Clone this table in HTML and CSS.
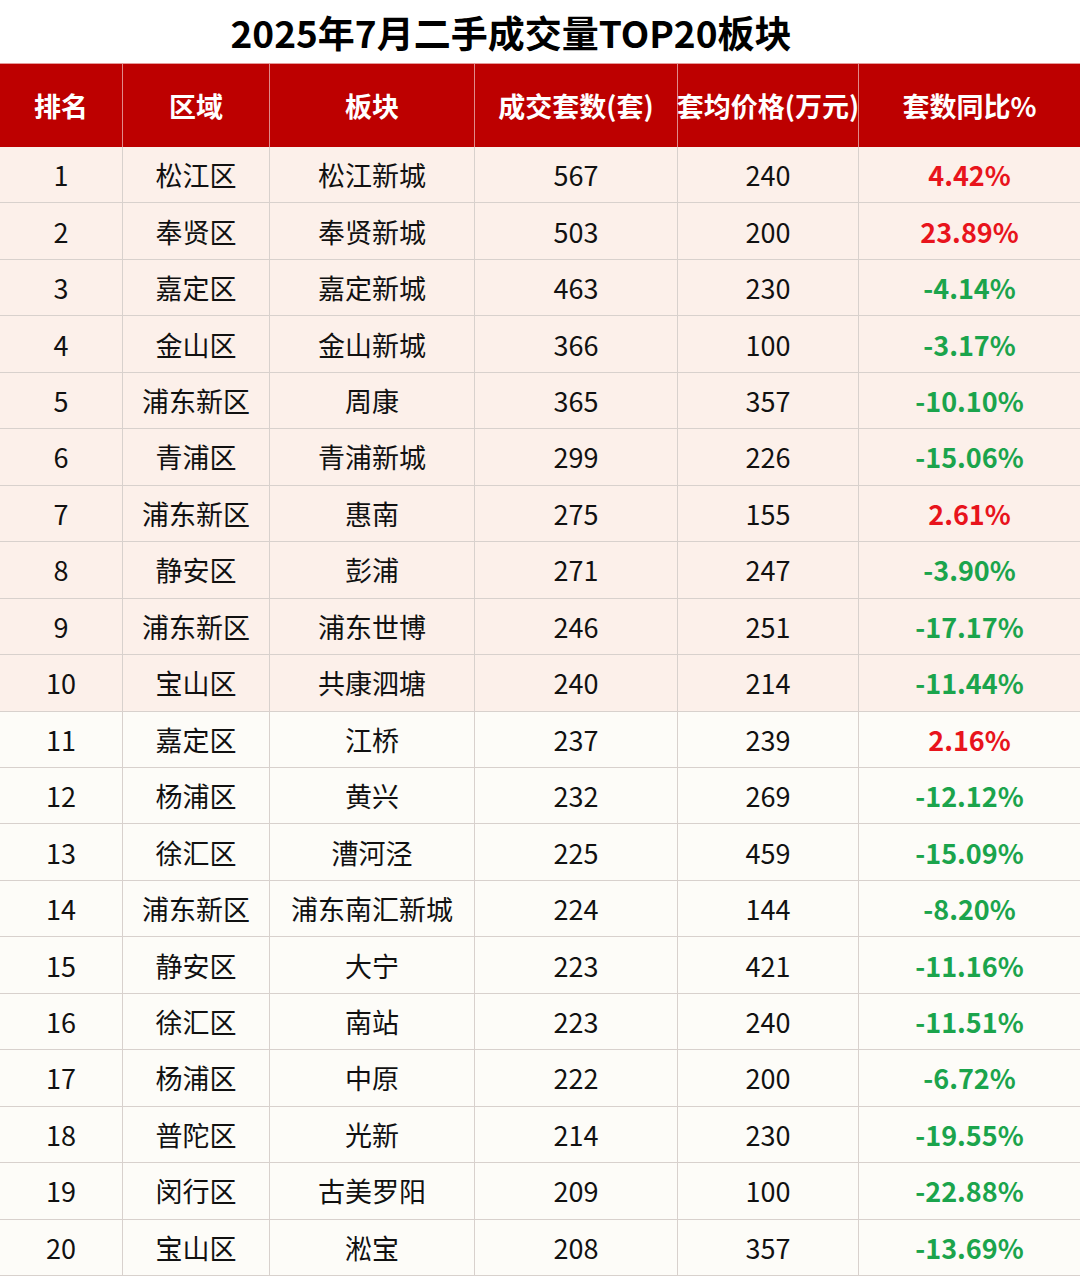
FILE: index.html
```html
<!DOCTYPE html>
<html lang="zh-CN">
<head>
<meta charset="utf-8">
<title>2025年7月二手成交量TOP20板块</title>
<link rel="stylesheet" href="styles.css">
</head>
<body>
<div class="page">
  <h1 class="title">2025年7月二手成交量TOP20板块</h1>
  <div class="table">
    <div class="row head">
      <div class="cell">排名</div><div class="cell">区域</div><div class="cell">板块</div><div class="cell">成交套数(套)</div><div class="cell">套均价格(万元)</div><div class="cell">套数同比%</div>
    </div>
    <div class="row pink"><div class="cell">1</div><div class="cell">松江区</div><div class="cell">松江新城</div><div class="cell">567</div><div class="cell">240</div><div class="cell pct up">4.42%</div></div>
    <div class="row pink"><div class="cell">2</div><div class="cell">奉贤区</div><div class="cell">奉贤新城</div><div class="cell">503</div><div class="cell">200</div><div class="cell pct up">23.89%</div></div>
    <div class="row pink"><div class="cell">3</div><div class="cell">嘉定区</div><div class="cell">嘉定新城</div><div class="cell">463</div><div class="cell">230</div><div class="cell pct down">-4.14%</div></div>
    <div class="row pink"><div class="cell">4</div><div class="cell">金山区</div><div class="cell">金山新城</div><div class="cell">366</div><div class="cell">100</div><div class="cell pct down">-3.17%</div></div>
    <div class="row pink"><div class="cell">5</div><div class="cell">浦东新区</div><div class="cell">周康</div><div class="cell">365</div><div class="cell">357</div><div class="cell pct down">-10.10%</div></div>
    <div class="row pink"><div class="cell">6</div><div class="cell">青浦区</div><div class="cell">青浦新城</div><div class="cell">299</div><div class="cell">226</div><div class="cell pct down">-15.06%</div></div>
    <div class="row pink"><div class="cell">7</div><div class="cell">浦东新区</div><div class="cell">惠南</div><div class="cell">275</div><div class="cell">155</div><div class="cell pct up">2.61%</div></div>
    <div class="row pink"><div class="cell">8</div><div class="cell">静安区</div><div class="cell">彭浦</div><div class="cell">271</div><div class="cell">247</div><div class="cell pct down">-3.90%</div></div>
    <div class="row pink"><div class="cell">9</div><div class="cell">浦东新区</div><div class="cell">浦东世博</div><div class="cell">246</div><div class="cell">251</div><div class="cell pct down">-17.17%</div></div>
    <div class="row pink"><div class="cell">10</div><div class="cell">宝山区</div><div class="cell">共康泗塘</div><div class="cell">240</div><div class="cell">214</div><div class="cell pct down">-11.44%</div></div>
    <div class="row light"><div class="cell">11</div><div class="cell">嘉定区</div><div class="cell">江桥</div><div class="cell">237</div><div class="cell">239</div><div class="cell pct up">2.16%</div></div>
    <div class="row light"><div class="cell">12</div><div class="cell">杨浦区</div><div class="cell">黄兴</div><div class="cell">232</div><div class="cell">269</div><div class="cell pct down">-12.12%</div></div>
    <div class="row light"><div class="cell">13</div><div class="cell">徐汇区</div><div class="cell">漕河泾</div><div class="cell">225</div><div class="cell">459</div><div class="cell pct down">-15.09%</div></div>
    <div class="row light"><div class="cell">14</div><div class="cell">浦东新区</div><div class="cell">浦东南汇新城</div><div class="cell">224</div><div class="cell">144</div><div class="cell pct down">-8.20%</div></div>
    <div class="row light"><div class="cell">15</div><div class="cell">静安区</div><div class="cell">大宁</div><div class="cell">223</div><div class="cell">421</div><div class="cell pct down">-11.16%</div></div>
    <div class="row light"><div class="cell">16</div><div class="cell">徐汇区</div><div class="cell">南站</div><div class="cell">223</div><div class="cell">240</div><div class="cell pct down">-11.51%</div></div>
    <div class="row light"><div class="cell">17</div><div class="cell">杨浦区</div><div class="cell">中原</div><div class="cell">222</div><div class="cell">200</div><div class="cell pct down">-6.72%</div></div>
    <div class="row light"><div class="cell">18</div><div class="cell">普陀区</div><div class="cell">光新</div><div class="cell">214</div><div class="cell">230</div><div class="cell pct down">-19.55%</div></div>
    <div class="row light"><div class="cell">19</div><div class="cell">闵行区</div><div class="cell">古美罗阳</div><div class="cell">209</div><div class="cell">100</div><div class="cell pct down">-22.88%</div></div>
    <div class="row light"><div class="cell">20</div><div class="cell">宝山区</div><div class="cell">淞宝</div><div class="cell">208</div><div class="cell">357</div><div class="cell pct down">-13.69%</div></div>
  </div>
</div>
</body>
</html>
```

FILE: styles.css
```css
html, body {
  margin: 0;
  padding: 0;
  background: #ffffff;
}
body {
  font-family: "Noto Sans CJK SC", "Noto Sans", sans-serif;
  color: #111111;
}
.page {
  width: 1080px;
  height: 1276px;
  display: flex;
  flex-direction: column;
  overflow: hidden;
}
.title {
  margin: 0;
  height: 63px;
  display: flex;
  align-items: center;
  justify-content: center;
  padding-right: 58px;
  font-size: 37px;
  font-weight: 700;
  color: #000000;
}
.table {
  flex: 1;
  display: grid;
  grid-template-rows: 84px repeat(20, 1fr);
}
.row {
  display: grid;
  grid-template-columns: 123px 147px 205px 203px 181px 1fr;
}
.cell {
  box-sizing: border-box;
  display: flex;
  align-items: center;
  justify-content: center;
  font-size: 27px;
  border-right: 1px solid #d8d1cd;
  border-bottom: 1px solid #d8d1cd;
  white-space: nowrap;
}
.cell:last-child {
  border-right: none;
}
.head {
  background: #bd0000;
  border-top: 1px solid #e59a9a;
}
.head .cell {
  color: #ffffff;
  font-weight: 700;
  font-size: 27px;
  border-right-color: #e08a8a;
  border-bottom: none;
}
.pink {
  background: #fcf0ea;
}
.light {
  background: #fdfcf8;
}
.pct {
  font-weight: 700;
}
.up {
  color: #e8141c;
}
.down {
  color: #1ba44c;
}
```
